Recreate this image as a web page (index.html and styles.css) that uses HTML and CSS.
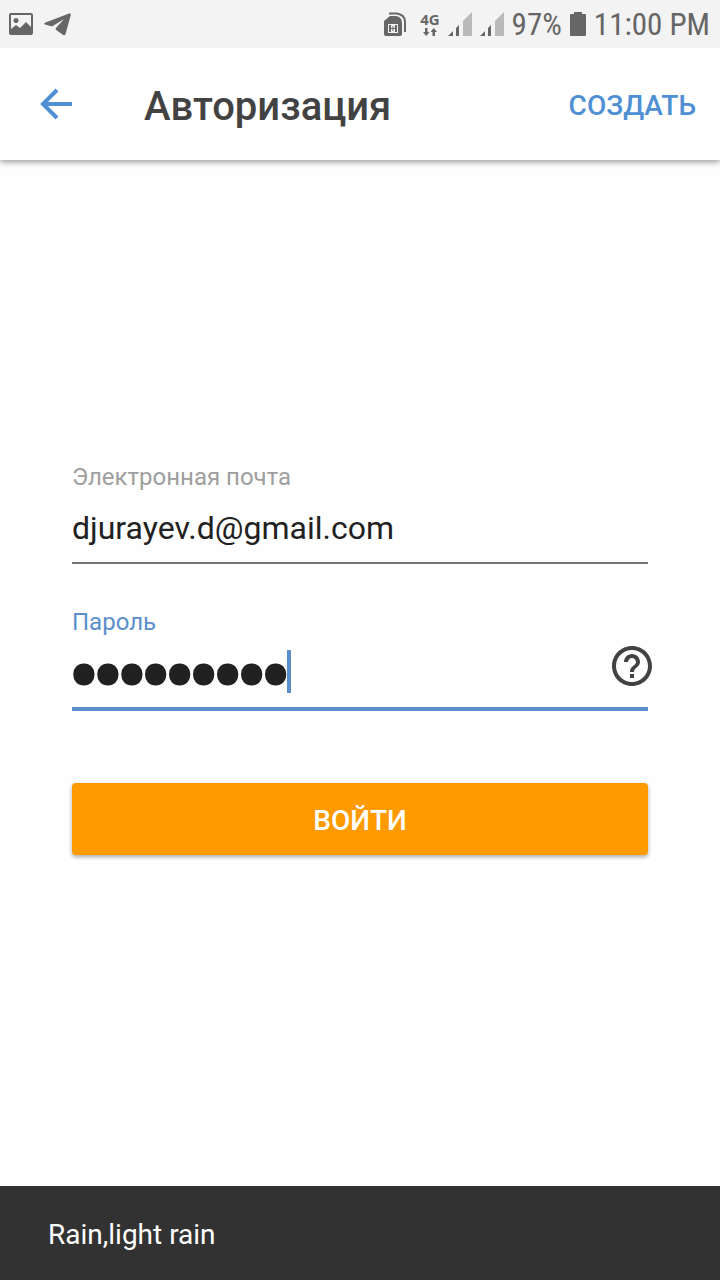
FILE: index.html
```html
<!DOCTYPE html>
<html lang="ru">
<head>
<meta charset="utf-8">
<meta name="viewport" content="width=device-width, initial-scale=1">
<title>Авторизация</title>
<link rel="stylesheet" href="styles.css">
</head>
<body>
<div class="status">
  <div class="status-group status-left">
    <svg width="24" height="22" viewBox="0 0 24 22" aria-hidden="true"><path fill="#666" fill-rule="evenodd" d="M2 0h20a2 2 0 0 1 2 2v18a2 2 0 0 1-2 2H2a2 2 0 0 1-2-2V2a2 2 0 0 1 2-2zm0 2v14l5-4 4 3 6-6 5 5V2zM7 5a2.500 2.500 0 1 1 0 5a2.500 2.500 0 1 1 0-5z"/></svg>
    <svg width="27" height="23" viewBox="0 0 27 23" aria-hidden="true"><path fill="#666" d="M25 .5 1 9.700Q-.5 10.500 1 11.500L8 13.500 20 6 12 15q-1 1 .2 2l7 5q1.800 1 2.300-1L26.800 2Q27 0 25 .5z"/></svg>
  </div>
  <div class="status-group">
    <svg width="22" height="25" viewBox="0 0 22 25" aria-hidden="true"><path fill="none" stroke="#666" stroke-width="2" d="M5 1.500h8q8 1.500 8 8V20"/><path fill="#666" fill-rule="evenodd" d="M6 4h6q6 1 6 7v11a2 2 0 0 1-2 2H2a2 2 0 0 1-2-2V9zM4 12v9h10v-9z"/><path fill="none" stroke="#666" stroke-width="2" d="M6 13v7M12 13v7"/><path fill="none" stroke="#666" stroke-width="1" d="M6 16.500h6M9 14v5"/></svg>
    <div class="network"><span>4G</span>
      <svg width="14" height="8" viewBox="0 0 14 8" aria-hidden="true"><path fill="#666" d="M2 0h2.500v4H6.500L3.200 8 0 4h2zM9.500 8H12V4h2L10.800 0 7.500 4h2z"/></svg>
    </div>
    <svg width="24" height="24" viewBox="0 0 24 24" aria-hidden="true"><path fill="#666" d="M0 24l5-5v5zM8 24V16l3-3v11z"/><path fill="#b9b9b9" d="M15 24V9l9-9v24z"/></svg>
    <svg width="24" height="24" viewBox="0 0 24 24" aria-hidden="true"><path fill="#666" d="M0 24l5-5v5zM8 24V16l3-3v11z"/><path fill="#b9b9b9" d="M15 24V9l9-9v24z"/></svg>
    <span class="status-text">97%</span>
    <svg width="16" height="24" viewBox="0 0 16 24" aria-hidden="true"><path fill="#666" d="M4 0h8v2h3a1 1 0 0 1 1 1v20a1 1 0 0 1-1 1H1a1 1 0 0 1-1-1V3a1 1 0 0 1 1-1h3z"/></svg>
    <span class="status-text">11:00 PM</span>
  </div>
</div>
<header class="appbar">
  <button class="back" type="button" aria-label="Назад">
    <svg width="32" height="32" viewBox="0 0 32 32" aria-hidden="true"><path fill="none" stroke="#4f8fd3" stroke-width="4" d="M32 16H4M17 2 3 16l14 14"/></svg>
  </button>
  <h1 class="title">Авторизация</h1>
  <button class="create" type="button">СОЗДАТЬ</button>
</header>
<main class="content">
  <form class="form">
    <div class="field">
      <label class="label" for="email">Электронная почта</label>
      <input class="input" id="email" type="email" value="djurayev.d@gmail.com">
    </div>
    <div class="field field-active">
      <label class="label" for="password">Пароль</label>
      <div class="password-row">
        <input class="input password" id="password" type="password" value="password1">
        <span class="caret"></span>
        <button class="help" type="button" aria-label="Помощь">
          <svg width="40" height="40" viewBox="2 2 20 20" aria-hidden="true"><path fill="#424242" d="M11 18h2v-2h-2v2zm1-16C6.480 2 2 6.480 2 12s4.480 10 10 10 10-4.480 10-10S17.520 2 12 2zm0 18c-4.410 0-8-3.590-8-8s3.590-8 8-8 8 3.590 8 8-3.590 8-8 8zm0-14c-2.210 0-4 1.790-4 4h2c0-1.100.9-2 2-2s2 .9 2 2c0 2-3 1.750-3 5h2c0-2.250 3-2.500 3-5 0-2.210-1.790-4-4-4z"/></svg>
        </button>
      </div>
    </div>
    <button class="submit" type="submit">ВОЙТИ</button>
  </form>
</main>
<div class="snackbar" role="status">Rain,light rain</div>
</body>
</html>
```
FILE: styles.css
```css
* {
  box-sizing: border-box;
}

body {
  margin: 0;
  min-height: 100vh;
  display: flex;
  flex-direction: column;
  background: #fefefe;
  color: #212121;
  font-family: Roboto, "Noto Sans", sans-serif;
}

button {
  padding: 0;
  border: 0;
  background: none;
  font: inherit;
}

svg {
  display: block;
  flex: none;
}

.status {
  display: flex;
  justify-content: space-between;
  align-items: center;
  height: 48px;
  padding: 0 12px 0 9px;
  background: #f3f3f3;
  color: #666;
}

.status-group {
  display: flex;
  align-items: center;
  gap: 8px;
}

.status-left {
  gap: 11px;
}

.status-text {
  padding-top: 2px;
  font-family: "Roboto Condensed", Roboto, sans-serif;
  font-size: 31px;
  line-height: 46px;
}

.status-text:last-child {
  margin: 0 -2px 0 0;
}

.network {
  display: flex;
  flex-direction: column;
  align-items: center;
  gap: 2px;
  margin-left: 6px;
  font: 700 15px/14px "Open Sans", sans-serif;
}

.appbar {
  display: flex;
  align-items: center;
  height: 112px;
  padding: 0 24px 0 40px;
  background: #fff;
  box-shadow: 0 2px 6px rgba(0, 0, 0, 0.4);
  clip-path: inset(0 0 -12px 0);
}

.title {
  flex: 1;
  margin: 0 0 0 72px;
  padding-top: 5px;
  color: #424242;
  font-size: 40px;
  font-weight: 500;
  line-height: 48px;
}

.create {
  padding-top: 2px;
  color: #4f8fd3;
  font-size: 28px;
  font-weight: 500;
}

.content {
  flex: 1;
  display: flex;
  flex-direction: column;
  justify-content: center;
  padding: 0 72px 31px;
}

.form {
  display: flex;
  flex-direction: column;
}

.field {
  margin-bottom: 41px;
  border-bottom: 2px solid #757575;
}

.field-active {
  margin-bottom: 72px;
  border-bottom: 4px solid #5a8fcb;
}

.label {
  display: block;
  color: #9e9e9e;
  font-size: 24px;
  line-height: 34px;
}

.field-active .label {
  color: #5a8fcb;
}

.input {
  display: block;
  width: 100%;
  height: 68px;
  padding: 0;
  border: 0;
  outline: 0;
  background: none;
  color: #212121;
  font-family: Roboto, sans-serif;
  font-size: 32px;
}

.password-row {
  position: relative;
  display: flex;
  align-items: flex-start;
}

.password {
  padding-top: 4px;
  font-size: 71px;
  -webkit-text-stroke: 7px #212121;
}

.caret {
  position: absolute;
  left: 215px;
  top: 11px;
  width: 4px;
  height: 43px;
  background: #5a8fcb;
}

.help {
  flex: none;
  margin: 7px -4px 0 0;
}

.submit {
  height: 72px;
  padding-top: 2px;
  border-radius: 4px;
  background: #ff9a00;
  box-shadow: 0 2px 4px rgba(0, 0, 0, 0.35);
  color: #fff;
  font-size: 28px;
  font-weight: 500;
}

.snackbar {
  padding: 33px 48px 29px;
  background: #323232;
  color: #fff;
  font-size: 28px;
  line-height: 32px;
}
```
